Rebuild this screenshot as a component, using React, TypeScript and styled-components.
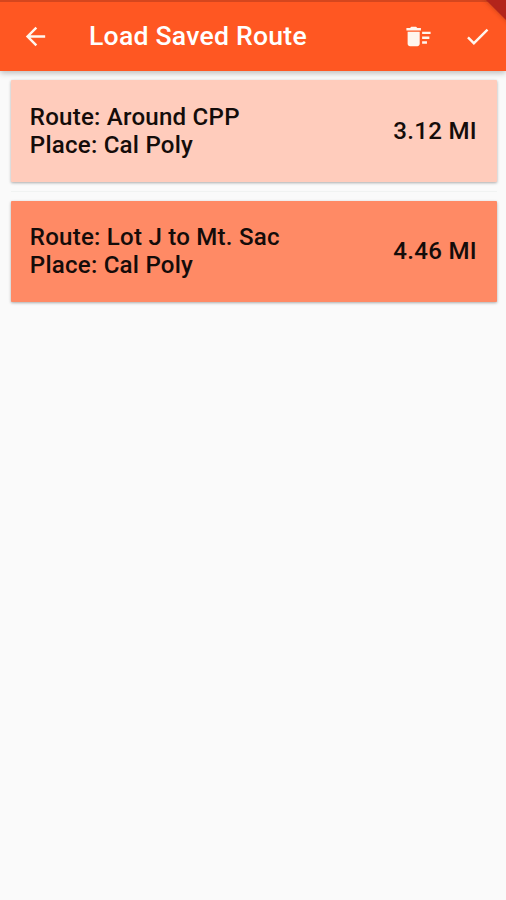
import React from "react";
import styled, { createGlobalStyle } from "styled-components";

const GlobalStyle = createGlobalStyle`
  * { box-sizing: border-box; }
  body { margin: 0; background: #fafafa; font-family: Roboto, sans-serif; }
`;

const Screen = styled.div`
  position: relative;
  width: 506px;
  height: 900px;
  overflow: hidden;
  background: #fafafa;
`;

const AppBar = styled.header`
  display: flex;
  align-items: center;
  height: 71px;
  padding: 0 14px 2px 21px;
  border-top: 2px solid #d5461e;
  background: #ff5722;
  box-shadow: 0 2px 6px rgba(0, 0, 0, 0.26);
`;

const Title = styled.h1`
  flex: 1;
  margin: 0 0 0 39px;
  font-size: 26.6px;
  line-height: 32px;
  font-weight: 500;
  letter-spacing: 0.23px;
  color: #fff;
  white-space: nowrap;
`;

const IconButton = styled.button<{ $gap?: number }>`
  display: flex;
  margin: 2px 0 0 ${(p) => p.$gap ?? 0}px;
  padding: 0;
  border: 0;
  background: none;
  color: #fff6ee;
`;

const RouteList = styled.main`
  display: flex;
  flex-direction: column;
  padding: 9px 9px 0 10.5px;
`;

const RouteCard = styled.article<{ $tone: string }>`
  display: flex;
  align-items: center;
  justify-content: space-between;
  height: 101.6px;
  padding: 0 20px 0 19.3px;
  border-radius: 1px;
  background: ${(p) => p.$tone};
  box-shadow: 0 1px 3px rgba(0, 0, 0, 0.32);
  color: #140c0a;
  font-size: 24.1px;
  font-weight: 500;
  line-height: 28px;
  letter-spacing: 0.22px;
  white-space: nowrap;

  & + & {
    margin-top: 19px;
  }
`;

const Divider = styled.hr`
  width: 100%;
  height: 1px;
  margin: 9px 0;
  border: 0;
  background: #f1f3f2;
`;

const Distance = styled.span`
  letter-spacing: 0.3px;
`;

const CornerBanner = styled.svg`
  position: absolute;
  top: 0;
  right: 0;
`;

const routes = [
  { name: "Around CPP", place: "Cal Poly", distance: "3.12 MI", tone: "#ffccbc" },
  { name: "Lot J to Mt. Sac", place: "Cal Poly", distance: "4.46 MI", tone: "#ff8a65" },
];

export default function App() {
  return (
    <Screen>
      <GlobalStyle />
      <AppBar>
        <IconButton aria-label="Back">
          <svg width="29" height="29" viewBox="0 0 24 24" fill="currentColor">
            <path d="M20 11H7.83l5.59-5.59L12 4l-8 8 8 8 1.41-1.41L7.83 13H20v-2z" />
          </svg>
        </IconButton>
        <Title>Load Saved Route</Title>
        <IconButton aria-label="Delete routes">
          <svg width="29" height="29" viewBox="0 0 24 24" fill="currentColor">
            <path d="M15 16h4v2h-4zm0-8h7v2h-7zm0 4h6v2h-6zM3 18c0 1.1.9 2 2 2h6c1.1 0 2-.9 2-2V8H3v10zM14 5h-3l-1-1H6L5 5H2v2h12z" />
          </svg>
        </IconButton>
        <IconButton aria-label="Confirm" $gap={30}>
          <svg width="29" height="29" viewBox="0 0 24 24" fill="currentColor">
            <path d="M9 16.17 4.83 12l-1.42 1.41L9 19 21 7l-1.41-1.41z" />
          </svg>
        </IconButton>
      </AppBar>
      <RouteList>
        {routes.map((route, index) => (
          <React.Fragment key={route.name}>
            {index > 0 && <Divider />}
            <RouteCard $tone={route.tone}>
              <div>
                <div>Route: {route.name}</div>
                <div>Place: {route.place}</div>
              </div>
              <Distance>{route.distance}</Distance>
            </RouteCard>
          </React.Fragment>
        ))}
      </RouteList>
      <CornerBanner width="30" height="28" viewBox="0 0 30 28">
        <defs>
          <filter id="bannerShadow" x="-30%" y="-30%" width="160%" height="160%">
            <feGaussianBlur stdDeviation="2" />
          </filter>
        </defs>
        <path d="M7 -2H34V24Z" fill="#8f2a12" opacity="0.5" filter="url(#bannerShadow)" />
        <path d="M10 0H30V20Z" fill="#b3241b" />
      </CornerBanner>
    </Screen>
  );
}
